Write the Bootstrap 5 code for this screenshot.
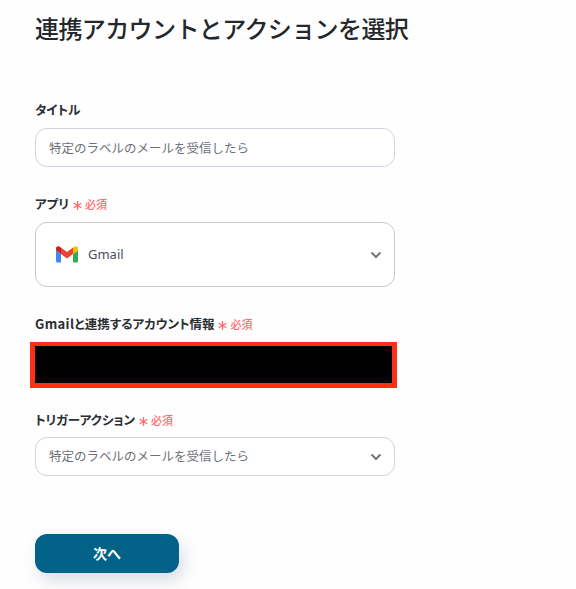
<!DOCTYPE html>
<html lang="ja">
<head>
<meta charset="utf-8">
<title>連携アカウントとアクションを選択</title>
<link href="https://cdn.jsdelivr.net/npm/bootstrap@5.3.0/dist/css/bootstrap.min.css" rel="stylesheet">
<style>
html,body{height:589px;overflow:hidden}
body{background:#fefefe;font-family:"Noto Sans CJK JP","Noto Sans",sans-serif;color:#2b2e33}
.pane{width:360px;margin-left:35px}
.headline{font-size:24px;font-weight:500;line-height:36px;margin:10px 0 0;letter-spacing:-.6px;white-space:nowrap;color:#24272b}
.fld-label{font-size:12.5px;font-weight:700;line-height:18px;margin:0;color:#2b2e33;font-feature-settings:"palt"}
.latin{font-size:13px;letter-spacing:.35px}
.req{font-size:11px;font-weight:500;color:#ff6b72;line-height:18px;gap:3px}
.req svg{width:9px;height:9px;display:block;margin-top:2px}
.fld{border:1px solid #cfd3de;border-radius:12px;background:#fff;font-size:12.5px;color:#6d7177;padding:1px 14px 0 13px;height:39px;margin-top:9px}
.fld-app{height:65px;border-color:#c9c9c9;margin-top:9px;padding:0 12px 0 20px}
.fld-app .name{font-size:13px;color:#4c5056;margin-left:10px;font-family:"Noto Sans",sans-serif}
.fld-trig{margin-top:8px;padding:0 12px 0 13px}
.chev{width:12px;height:8px;flex:none}
.secret{background:#000;border:solid #ff2f17;border-width:4px 5px 5px;height:46px;margin:9px 0 0 -5px;width:367px}
.go{width:144px;height:39px;background:#026288;color:#fff;border:0;border-radius:12px;font-size:14px;font-weight:700;padding:0;box-shadow:4px 8px 16px rgba(90,105,140,.22)}
.go:hover,.go:active{background:#026288!important;color:#fff!important}
.g1{margin-top:55px}.g2{margin-top:28px}.g3{margin-top:28px}.g4{margin-top:23px}.g5{margin-top:58px}
</style>
</head>
<body>
<main class="pane">
<h1 class="headline">連携アカウントとアクションを選択</h1>

<section class="g1">
<p class="fld-label">タイトル</p>
<div class="fld d-flex align-items-center">特定のラベルのメールを受信したら</div>
</section>

<section class="g2">
<div class="d-flex align-items-center gap-1"><p class="fld-label">アプリ</p><span class="req d-flex align-items-center"><svg viewBox="0 0 10 10"><path d="M5 0v10M.7 2.500l8.600 5M9.300 2.500l-8.600 5" stroke="#ff6b72" stroke-width="1.500"/></svg>必須</span></div>
<div class="fld fld-app d-flex align-items-center justify-content-between">
<div class="d-flex align-items-center">
<svg width="22" height="17" viewBox="0 0 22 17"><path d="M1.500 16.500H5V8L0 4.200V15a1.500 1.500 0 0 0 1.500 1.500z" fill="#4285f4"/><path d="M17 16.500h3.500A1.500 1.500 0 0 0 22 15V4.200L17 8z" fill="#34a853"/><path d="M17 1.500V8l5-3.800V2.400C22 .6 19.900-.4 18.500.7z" fill="#fbbc04"/><path d="M5 8V1.500l6 4.500 6-4.500V8l-6 4.500z" fill="#ea4335"/><path d="M0 2.400v1.800L5 8V1.500L3.500.7C2.100-.4 0 .6 0 2.400z" fill="#c5221f"/></svg>
<span class="name">Gmail</span>
</div>
<svg class="chev" viewBox="0 0 12 8"><path d="M1.500 1.500 6 6l4.500-4.500" fill="none" stroke="#777" stroke-width="2"/></svg>
</div>
</section>

<section class="g3">
<div class="d-flex align-items-center gap-1"><p class="fld-label"><span class="latin">Gmail</span>と連携するアカウント情報</p><span class="req d-flex align-items-center"><svg viewBox="0 0 10 10"><path d="M5 0v10M.7 2.500l8.600 5M9.300 2.500l-8.600 5" stroke="#ff6b72" stroke-width="1.500"/></svg>必須</span></div>
<div class="secret"></div>
</section>

<section class="g4">
<div class="d-flex align-items-center gap-1"><p class="fld-label">トリガーアクション</p><span class="req d-flex align-items-center"><svg viewBox="0 0 10 10"><path d="M5 0v10M.7 2.500l8.600 5M9.300 2.500l-8.600 5" stroke="#ff6b72" stroke-width="1.500"/></svg>必須</span></div>
<div class="fld fld-trig d-flex align-items-center justify-content-between">特定のラベルのメールを受信したら
<svg class="chev" viewBox="0 0 12 8"><path d="M1.500 1.500 6 6l4.500-4.500" fill="none" stroke="#777" stroke-width="2"/></svg></div>
</section>

<div class="g5"><button type="button" class="btn go">次へ</button></div>
</main>
<script src="https://cdn.jsdelivr.net/npm/bootstrap@5.3.0/dist/js/bootstrap.bundle.min.js"></script>
</body>
</html>
